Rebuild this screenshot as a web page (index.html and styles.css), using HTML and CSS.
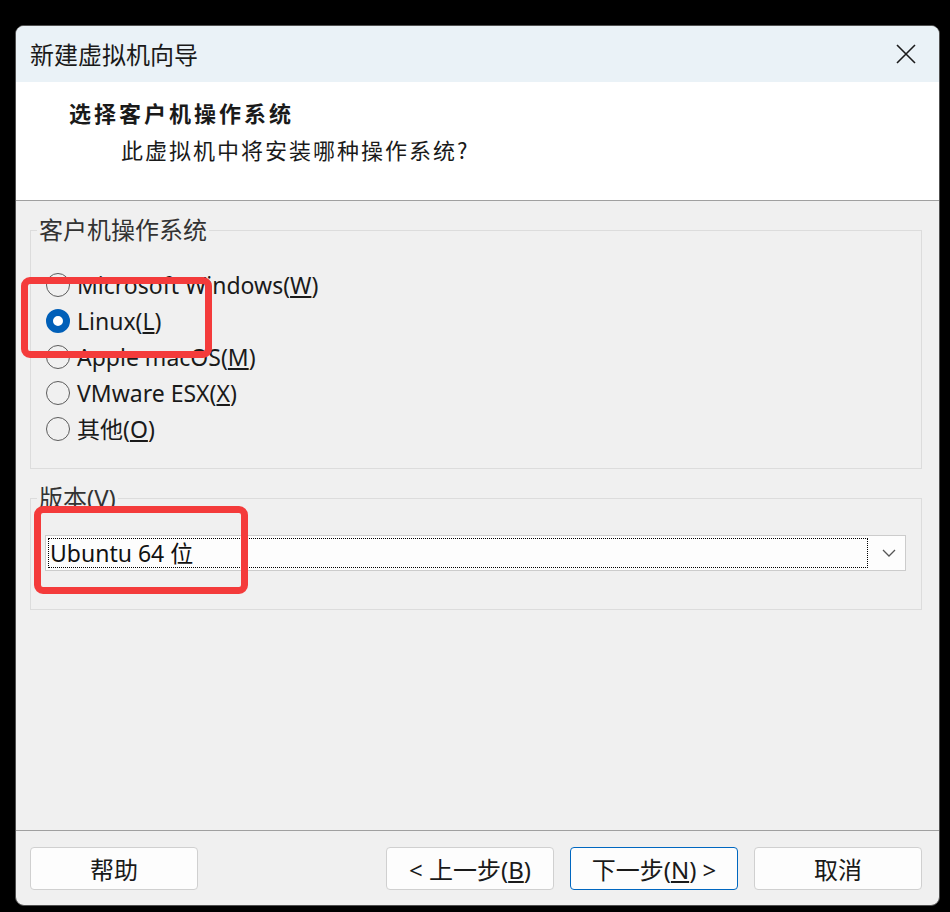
FILE: index.html
```html
<!DOCTYPE html>
<html lang="zh-CN">
<head>
    <meta charset="UTF-8">
    <title>新建虚拟机向导</title>
    <link rel="stylesheet" href="styles.css">
</head>
<body>
    <div class="window">
        <!-- Title bar -->
        <div class="titlebar">
            <span class="title">新建虚拟机向导</span>
            <svg class="close" width="20" height="20" viewBox="0 0 20 20">
                <path d="M1 1 L19 19 M19 1 L1 19" stroke="#1b1b1b" stroke-width="1.6" fill="none"/>
            </svg>
        </div>

        <!-- Page header -->
        <div class="header">
            <div class="heading">选择客户机操作系统</div>
            <div class="subheading">此虚拟机中将安装哪种操作系统?</div>
        </div>

        <!-- Main content -->
        <div class="content">
            <fieldset class="group os-group">
                <legend>客户机操作系统</legend>
                <div class="radio-list">
                    <div class="radio-row"><span class="radio"></span><span>Microsoft Windows(<u>W</u>)</span></div>
                    <div class="radio-row"><span class="radio checked"></span><span>Linux(<u>L</u>)</span></div>
                    <div class="radio-row"><span class="radio"></span><span>Apple macOS(<u>M</u>)</span></div>
                    <div class="radio-row"><span class="radio"></span><span>VMware ESX(<u>X</u>)</span></div>
                    <div class="radio-row"><span class="radio"></span><span>其他(<u>O</u>)</span></div>
                </div>
            </fieldset>

            <fieldset class="group version-group">
                <legend>版本(<u>V</u>)</legend>
                <div class="combo">
                    <div class="combo-value">Ubuntu 64 位</div>
                    <svg class="chevron" width="14" height="8" viewBox="0 0 14 8">
                        <path d="M1 1 L7 7 L13 1" stroke="#555" stroke-width="1.3" fill="none"/>
                    </svg>
                </div>
            </fieldset>
        </div>

        <!-- Footer buttons -->
        <div class="footer">
            <button class="btn">帮助</button>
            <div class="btn-group">
                <button class="btn">&lt; 上一步(<u>B</u>)</button>
                <button class="btn primary">下一步(<u>N</u>) &gt;</button>
                <button class="btn">取消</button>
            </div>
        </div>
    </div>

    <!-- annotation marks -->
    <div class="mark mark-linux"></div>
    <div class="mark mark-version"></div>
</body>
</html>
```

FILE: styles.css
```css
* { margin: 0; padding: 0; box-sizing: border-box; }
body {
    background-color: #000;
    font-family: "Noto Sans", "Noto Sans CJK SC", sans-serif;
    font-size: 23px;
    color: #1a1a1a;
    width: 950px;
    height: 912px;
    overflow: hidden;
}
.window {
    width: 925px;
    height: 881px;
    margin: 25px 0 0 15px;
    border: 1px solid #505050;
    border-radius: 9px;
    overflow: hidden;
    background-color: #f0f0f0;
    display: flex;
    flex-direction: column;
}
.titlebar {
    height: 56px;
    background-color: #eaf2f7;
    display: flex;
    align-items: center;
    justify-content: space-between;
    padding: 0 23px 0 14px;
    flex-shrink: 0;
}
.title {
    font-family: "Noto Sans CJK SC", sans-serif;
    font-size: 24px;
    line-height: 30px;
}
.header {
    height: 119px;
    background-color: #fff;
    border-bottom: 1px solid #a0a0a0;
    padding: 15px 0 0 53px;
    flex-shrink: 0;
}
.heading {
    font-family: "Noto Sans CJK SC", sans-serif;
    font-weight: bold;
    font-size: 22px;
    letter-spacing: 3px;
    line-height: 30px;
}
.subheading {
    font-family: "Noto Sans CJK SC", sans-serif;
    font-size: 22px;
    letter-spacing: 2px;
    line-height: 30px;
    margin: 7px 0 0 52px;
}
.content {
    flex: 1;
    padding: 14px 17px 0 14px;
}
.group {
    border: 1px solid #dcdcdc;
    min-width: 0;
    padding: 0;
}
.group legend {
    margin-left: 6px;
    padding: 0 2px;
    line-height: 30px;
    font-size: 24px;
    color: #333;
}
.radio-list {
    padding: 22px 0 21px 15px;
}
.radio-row {
    display: flex;
    align-items: center;
    height: 36px;
    gap: 7px;
    line-height: 30px;
}
.radio {
    width: 24px;
    height: 24px;
    border: 1.5px solid #5c5c5c;
    border-radius: 50%;
    flex-shrink: 0;
}
.radio.checked {
    border: 7px solid #005fb8;
    background-color: #fff;
}
.version-group {
    margin-top: 14px;
}
.combo {
    height: 36px;
    margin: 22px 15px 38px 14px;
    background-color: #fdfdfd;
    border: 1px solid #cccccc;
    display: flex;
    align-items: center;
    padding: 2px 9px 2px 2px;
    gap: 14px;
}
.combo-value {
    flex: 1;
    height: 100%;
    border: 1px dotted #000;
    padding-left: 1px;
    line-height: 29px;
    color: #111;
}
.footer {
    height: 75px;
    border-top: 1px solid #a0a0a0;
    display: flex;
    justify-content: space-between;
    padding: 16px 17px 0 14px;
    flex-shrink: 0;
}
.btn-group {
    display: flex;
    gap: 16px;
}
.btn {
    width: 168px;
    height: 43px;
    background-color: #fdfdfd;
    border: 1px solid #d0d0d0;
    border-radius: 4px;
    font-family: inherit;
    font-size: 24px;
    color: #1a1a1a;
}
.btn.primary {
    border-color: #0067c0;
}
.mark {
    position: absolute;
    border: 7px solid #f43b3b;
    border-radius: 9px;
}
.mark-linux {
    left: 21px;
    top: 277px;
    width: 191px;
    height: 81px;
}
.mark-version {
    left: 34px;
    top: 506px;
    width: 214px;
    height: 88px;
}
```
